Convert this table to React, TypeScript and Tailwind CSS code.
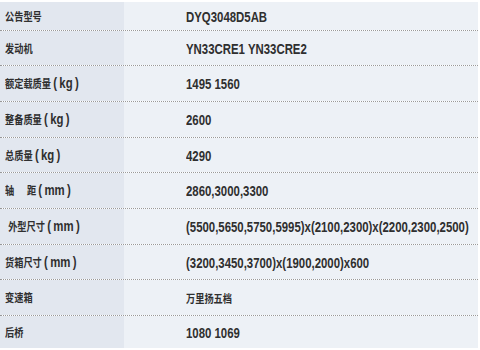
import React from 'react';

// CJK runs are set a little smaller than the latin text, like the source page
const Zh = ({ children }: { children: React.ReactNode }) => (
  <span className="text-[11.5px]">{children}</span>
);

interface Row {
  h: string;
  label: React.ReactNode;
  value: React.ReactNode;
}

const kg = '\u2009(\u2009kg\u2009)';
const mm = '\u2009(\u2009mm\u2009)';

const rows: Row[] = [
  { h: 'h-[28px]', label: <Zh>公告型号</Zh>, value: 'DYQ3048D5AB' },
  { h: 'h-[35px]', label: <Zh>发动机</Zh>, value: 'YN33CRE1 YN33CRE2' },
  { h: 'h-[36px]', label: <><Zh>额定载质量</Zh>{kg}</>, value: '1495 1560' },
  { h: 'h-[36px]', label: <><Zh>整备质量</Zh>{kg}</>, value: '2600' },
  { h: 'h-[35px]', label: <><Zh>总质量</Zh>{kg}</>, value: '4290' },
  { h: 'h-[36px]', label: <><Zh>轴</Zh>{'    '}<Zh>距</Zh>{mm}</>, value: '2860,3000,3300' },
  { h: 'h-[36px]', label: <>{' '}<Zh>外型尺寸</Zh>{mm}</>, value: '(5500,5650,5750,5995)x(2100,2300)x(2200,2300,2500)' },
  { h: 'h-[35px]', label: <><Zh>货箱尺寸</Zh>{mm}</>, value: '(3200,3450,3700)x(1900,2000)x600' },
  { h: 'h-[36px]', label: <Zh>变速箱</Zh>, value: <Zh>万里扬五档</Zh> },
  { h: 'h-[33px]', label: <Zh>后桥</Zh>, value: '1080 1069' },
];

function Cell({ children }: { children: React.ReactNode }) {
  return (
    <span className="inline-block origin-left scale-x-[0.8] whitespace-pre text-[14.25px] font-bold text-[#2f2f2f]">
      {children}
    </span>
  );
}

export default function App() {
  return (
    <div
      className="w-[480px] h-[350px] bg-white pt-[2px] overflow-hidden"
      style={{ fontFamily: '"Liberation Sans", "Noto Sans CJK SC", sans-serif' }}
    >
      <div className="w-[478px] flex flex-col">
        {rows.map((r, i) => (
          <div
            key={i}
            className={`${r.h} flex ${i > 0 ? 'border-t border-dotted border-[#999] shadow-[inset_0_1px_0_#fff]' : ''}`}
          >
            <div className="w-[124px] shrink-0 bg-[#e2e7ef] flex items-center pl-[5px] pt-[1px]">
              <Cell>{r.label}</Cell>
            </div>
            <div className="flex-1 min-w-0 bg-[#edf1f6] flex items-center pl-[62px] pt-[1px]">
              <div className="w-0">
                <Cell>{r.value}</Cell>
              </div>
            </div>
          </div>
        ))}
      </div>
    </div>
  );
}
